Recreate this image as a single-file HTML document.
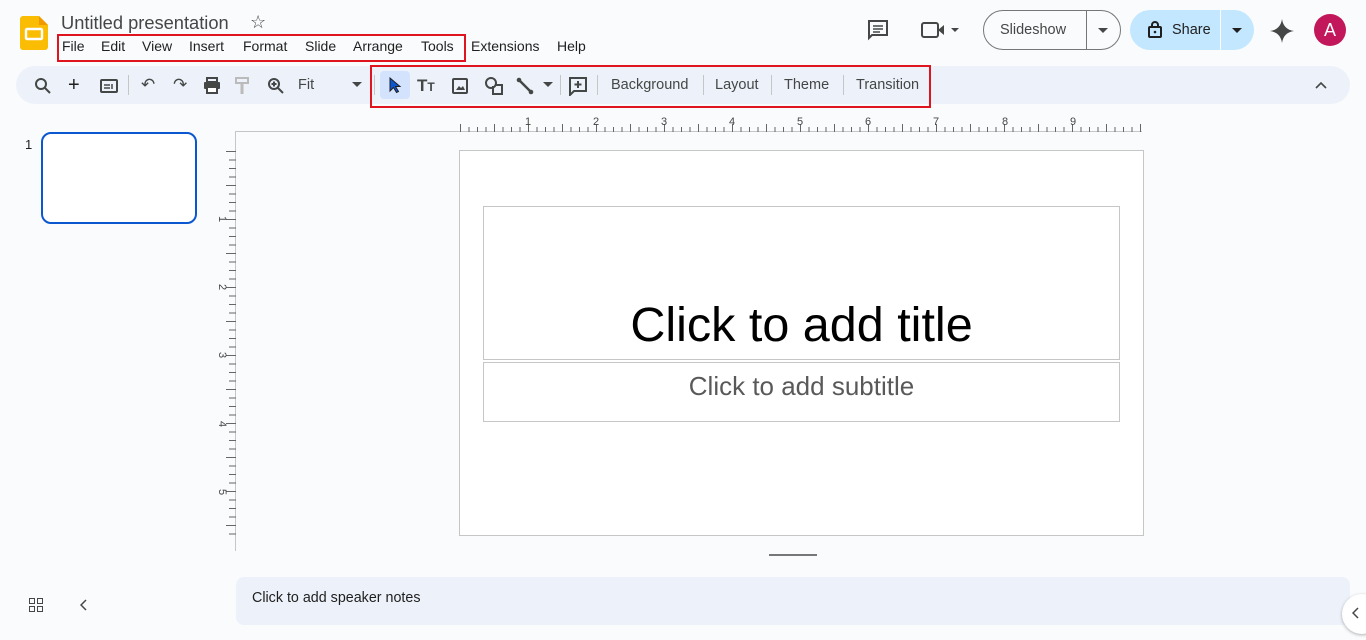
<!DOCTYPE html>
<html><head><meta charset="utf-8"><style>
*{margin:0;padding:0;box-sizing:border-box}
body{width:1366px;height:640px;background:#f9fbfd;font-family:"Liberation Sans",Arial,sans-serif;position:relative;overflow:hidden;color:#1f1f1f}
.a{position:absolute}
.menu span{position:absolute;top:38px;font-size:14px;color:#1f1f1f}
.tb{position:absolute;top:66px;left:16px;width:1334px;height:38px;background:#edf2fa;border-radius:19px}
.ti{position:absolute;top:77px;font-size:14.5px;color:#444746}
.sep{position:absolute;top:75px;width:1px;height:20px;background:#c4c7c5}
.red{position:absolute;border:2px solid #e0141e}
</style></head><body>
<svg class="a" style="left:20px;top:16px" width="28" height="34" viewBox="0 0 28 34"><path d="M0 3a3 3 0 0 1 3-3h16l9 9v22a3 3 0 0 1-3 3H3a3 3 0 0 1-3-3z" fill="#fbbc04"/><path d="M19 0v9h9z" fill="#f29900"/><rect x="6" y="13" width="16" height="10" rx="1" fill="none" stroke="#fff" stroke-width="2.4"/></svg>
<div class="a" style="left:61px;top:12px;font-size:18.3px;color:#444746">Untitled presentation</div>
<div class="a" style="left:250px;top:12px;font-size:18px;color:#444746">☆</div>
<div class="menu">
<span style="left:62px">File</span><span style="left:101px">Edit</span><span style="left:142px">View</span><span style="left:189px">Insert</span><span style="left:243px">Format</span><span style="left:305px">Slide</span><span style="left:353px">Arrange</span><span style="left:421px">Tools</span><span style="left:471px">Extensions</span><span style="left:557px">Help</span>
</div>
<div class="red" style="left:57px;top:34px;width:409px;height:28px"></div>
<svg class="a" style="left:867px;top:19px" width="22" height="22" viewBox="0 0 22 22"><path d="M2 2h18v14H5l-3 3z" fill="none" stroke="#444746" stroke-width="2"/><path d="M6 7h10M6 10h10M6 13h7" stroke="#444746" stroke-width="1.6"/></svg>
<svg class="a" style="left:920px;top:21px" width="42" height="18" viewBox="0 0 42 18"><rect x="2" y="2" width="16" height="14" rx="2" fill="none" stroke="#444746" stroke-width="2"/><path d="M18 9l6-5v10z" fill="#444746"/><path d="M31 7h8l-4 4z" fill="#444746"/></svg>
<div class="a" style="left:983px;top:10px;width:138px;height:40px;border:1px solid #747775;border-radius:20px"></div>
<div class="a" style="left:1086px;top:10px;width:1px;height:40px;background:#747775"></div>
<div class="a" style="left:1000px;top:22px;font-size:14.5px;color:#444746">Slideshow</div>
<svg class="a" style="left:1097px;top:26px" width="12" height="8"><path d="M1 2h10l-5 5z" fill="#444746"/></svg>
<div class="a" style="left:1130px;top:10px;width:124px;height:40px;background:#c2e7ff;border-radius:20px"></div>
<div class="a" style="left:1220px;top:10px;width:1px;height:40px;background:#f9fbfd"></div>
<svg class="a" style="left:1147px;top:20px" width="16" height="18" viewBox="0 0 16 18"><rect x="2" y="7" width="12" height="10" rx="1" fill="none" stroke="#1f1f1f" stroke-width="2"/><path d="M5 7V5a3 3 0 0 1 6 0v2" fill="none" stroke="#1f1f1f" stroke-width="2"/><circle cx="8" cy="12" r="1.3" fill="#1f1f1f"/></svg>
<div class="a" style="left:1172px;top:22px;font-size:14.5px;color:#1f1f1f">Share</div>
<svg class="a" style="left:1231px;top:26px" width="12" height="8"><path d="M1 2h10l-5 5z" fill="#1f1f1f"/></svg>
<svg class="a" style="left:1270px;top:19px" width="24" height="24" viewBox="0 0 24 24"><path d="M12 0C13 7 17 11 24 12 17 13 13 17 12 24 11 17 7 13 0 12 7 11 11 7 12 0z" fill="#444746"/></svg>
<div class="a" style="left:1314px;top:14px;width:32px;height:32px;border-radius:50%;background:#c2185b;color:#fff;font-size:18px;text-align:center;line-height:32px">A</div>
<div class="tb"></div>
<svg class="a" style="left:34px;top:77px" width="18" height="18" viewBox="0 0 18 18"><circle cx="7" cy="7" r="5" fill="none" stroke="#444746" stroke-width="2"/><path d="M11 11l5 5" stroke="#444746" stroke-width="2"/></svg>
<div class="ti" style="left:68px;top:74px;font-size:20px;color:#1f1f1f">+</div>
<svg class="a" style="left:100px;top:79px" width="18" height="14"><rect x="1" y="1" width="16" height="12" rx="1" fill="none" stroke="#444746" stroke-width="2"/><path d="M4 6h6M4 9h6M12 5v5" stroke="#444746" stroke-width="1.5"/></svg>
<div class="sep" style="left:128px"></div>
<div class="ti" style="left:141px;top:75px;font-size:17px">↶</div>
<div class="ti" style="left:173px;top:75px;font-size:17px">↷</div>
<svg class="a" style="left:203px;top:77px" width="18" height="17"><rect x="4" y="1" width="10" height="4" fill="none" stroke="#444746" stroke-width="2"/><rect x="1" y="5" width="16" height="7" rx="1" fill="#444746"/><rect x="4" y="10" width="10" height="6" fill="#fff" stroke="#444746" stroke-width="2"/></svg>
<svg class="a" style="left:235px;top:77px" width="14" height="18"><rect x="1" y="1" width="12" height="5" fill="none" stroke="#bbb" stroke-width="2"/><path d="M7 6v11" stroke="#bbb" stroke-width="3"/></svg>
<svg class="a" style="left:267px;top:77px" width="18" height="18"><circle cx="7" cy="7" r="5" fill="none" stroke="#444746" stroke-width="2"/><path d="M11 11l5 5M4.5 7h5M7 4.5v5" stroke="#444746" stroke-width="2"/></svg>
<div class="ti" style="left:298px">Fit</div>
<svg class="a" style="left:352px;top:82px" width="10" height="6"><path d="M0 0h10l-5 5z" fill="#444746"/></svg>
<div class="sep" style="left:374px"></div>
<div class="a" style="left:380px;top:71px;width:30px;height:28px;background:#d3e3fd;border-radius:4px"></div>
<svg class="a" style="left:388px;top:77px" width="14" height="17"><path d="M2 1v13l3.5-3.5 3 5 2-1-3-5H12z" fill="#0b57d0" stroke="#1f1f1f" stroke-width="1"/></svg>
<div class="ti" style="left:417px;top:76px;font-size:17px;font-weight:bold;color:#444746">T<span style="font-size:12px">T</span></div>
<svg class="a" style="left:452px;top:78px" width="16" height="16"><rect x="1" y="1" width="14" height="14" rx="1" fill="none" stroke="#444746" stroke-width="2"/><path d="M4 12l3-4 2 2 2-2 2 4z" fill="#444746"/></svg>
<svg class="a" style="left:484px;top:76px" width="20" height="20"><circle cx="7" cy="7" r="5" fill="none" stroke="#444746" stroke-width="2"/><path d="M9 10v8h9V9h-6" fill="none" stroke="#444746" stroke-width="2"/></svg>
<svg class="a" style="left:516px;top:77px" width="18" height="18"><path d="M3 3l12 12" stroke="#444746" stroke-width="2.5"/><circle cx="3" cy="3" r="2.3" fill="#444746"/><circle cx="15" cy="15" r="2.3" fill="#444746"/></svg>
<svg class="a" style="left:543px;top:82px" width="10" height="6"><path d="M0 0h10l-5 5z" fill="#444746"/></svg>
<div class="sep" style="left:560px"></div>
<svg class="a" style="left:568px;top:76px" width="20" height="20"><path d="M2 2h16v13H6l-4 4z" fill="none" stroke="#444746" stroke-width="2"/><path d="M10 5v7M6.5 8.5h7" stroke="#444746" stroke-width="2"/></svg>
<div class="sep" style="left:597px"></div>
<div class="ti" style="left:611px">Background</div>
<div class="sep" style="left:703px"></div>
<div class="ti" style="left:715px">Layout</div>
<div class="sep" style="left:771px"></div>
<div class="ti" style="left:784px">Theme</div>
<div class="sep" style="left:843px"></div>
<div class="ti" style="left:856px">Transition</div>
<div class="red" style="left:370px;top:65px;width:561px;height:43px"></div>
<svg class="a" style="left:1315px;top:81px" width="12" height="8"><path d="M1 7l5-5 5 5" fill="none" stroke="#444746" stroke-width="1.6"/></svg>
<div class="a" style="left:25px;top:137px;font-size:13px;color:#1f1f1f">1</div>
<div class="a" style="left:41px;top:132px;width:156px;height:92px;border:2px solid #0b57d0;border-radius:10px;background:#fff"></div>
<div class="a" style="left:235px;top:131px;width:907px;height:1px;background:#c4c7c5"></div>
<div class="a" style="left:235px;top:131px;width:1px;height:420px;background:#c4c7c5"></div>
<div class="a" style="left:460px;top:127px;width:683px;height:5px;background:repeating-linear-gradient(90deg,#666 0 1px,transparent 1px 8.5px)"></div>
<div class="a" style="left:460px;top:124px;width:683px;height:8px;background:repeating-linear-gradient(90deg,#666 0 1px,transparent 1px 34px)"></div>
<div class="a" style="left:229px;top:151px;width:7px;height:385px;background:repeating-linear-gradient(180deg,#666 0 1px,transparent 1px 8.5px)"></div>
<div class="a" style="left:226px;top:151px;width:10px;height:385px;background:repeating-linear-gradient(180deg,#666 0 1px,transparent 1px 34px)"></div>
<div class="a" style="font-size:11px;color:#444746;top:116px;left:525px">1</div>
<div class="a" style="font-size:11px;color:#444746;top:116px;left:593px">2</div>
<div class="a" style="font-size:11px;color:#444746;top:116px;left:661px">3</div>
<div class="a" style="font-size:11px;color:#444746;top:116px;left:729px">4</div>
<div class="a" style="font-size:11px;color:#444746;top:116px;left:797px">5</div>
<div class="a" style="font-size:11px;color:#444746;top:116px;left:865px">6</div>
<div class="a" style="font-size:11px;color:#444746;top:116px;left:933px">7</div>
<div class="a" style="font-size:11px;color:#444746;top:116px;left:1002px">8</div>
<div class="a" style="font-size:11px;color:#444746;top:116px;left:1070px">9</div>
<div class="a" style="font-size:11px;color:#444746;left:219px;top:213px;transform:rotate(90deg)">1</div>
<div class="a" style="font-size:11px;color:#444746;left:219px;top:281px;transform:rotate(90deg)">2</div>
<div class="a" style="font-size:11px;color:#444746;left:219px;top:349px;transform:rotate(90deg)">3</div>
<div class="a" style="font-size:11px;color:#444746;left:219px;top:418px;transform:rotate(90deg)">4</div>
<div class="a" style="font-size:11px;color:#444746;left:219px;top:486px;transform:rotate(90deg)">5</div>
<div class="a" style="left:459px;top:150px;width:685px;height:386px;background:#fff;border:1px solid #c4c7c5"></div>
<div class="a" style="left:483px;top:206px;width:637px;height:154px;border:1px solid #c4c7c5"></div>
<div class="a" style="left:483px;top:362px;width:637px;height:60px;border:1px solid #c4c7c5"></div>
<div class="a" style="left:483px;top:295px;width:637px;text-align:center;font-size:48.5px;color:#000;line-height:60px">Click to add title</div>
<div class="a" style="left:483px;top:370px;width:637px;text-align:center;font-size:26px;color:#595959;line-height:32px">Click to add subtitle</div>
<div class="a" style="left:769px;top:554px;width:48px;height:2px;background:#777"></div>
<div class="a" style="left:236px;top:577px;width:1114px;height:48px;background:#edf2fa;border-radius:8px"></div>
<div class="a" style="left:252px;top:590px;font-size:14.3px;color:#1f1f1f">Click to add speaker notes</div>
<svg class="a" style="left:29px;top:598px" width="14" height="14"><rect x="0.5" y="0.5" width="5" height="5" fill="none" stroke="#444746"/><rect x="8.5" y="0.5" width="5" height="5" fill="none" stroke="#444746"/><rect x="0.5" y="8.5" width="5" height="5" fill="none" stroke="#444746"/><rect x="8.5" y="8.5" width="5" height="5" fill="none" stroke="#444746"/></svg>
<svg class="a" style="left:80px;top:599px" width="8" height="12"><path d="M6 1L1 6l5 5" fill="none" stroke="#444746" stroke-width="1.5"/></svg>
<div class="a" style="left:1342px;top:594px;width:40px;height:40px;border-radius:50%;background:#fff;box-shadow:0 1px 3px rgba(0,0,0,.3)"></div>
<svg class="a" style="left:1352px;top:607px" width="8" height="12"><path d="M6 1L1 6l5 5" fill="none" stroke="#444746" stroke-width="1.5"/></svg>
</body></html>
